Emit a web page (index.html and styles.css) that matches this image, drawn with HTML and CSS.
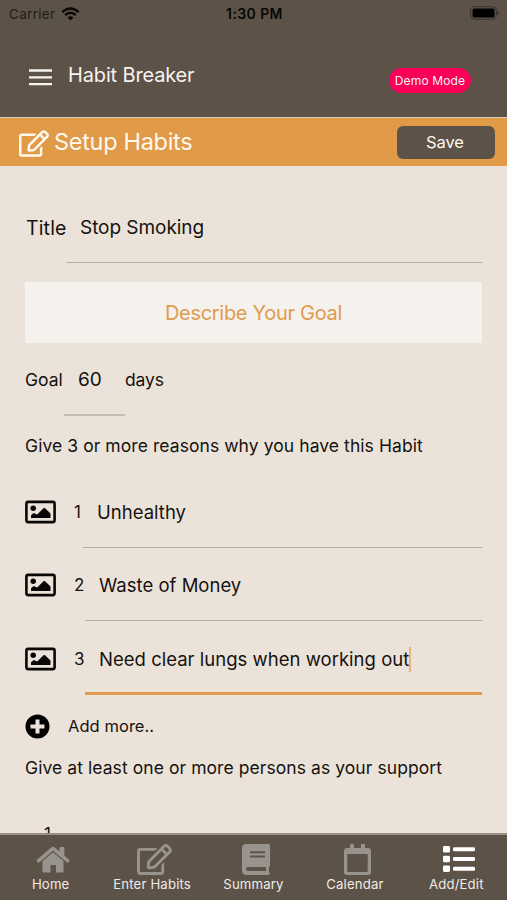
FILE: index.html
```html
<!DOCTYPE html>
<html lang="en">
<head>
<meta charset="utf-8">
<title>Habit Breaker</title>
<link rel="stylesheet" href="styles.css">
</head>
<body>
<svg class="symbols" aria-hidden="true">
  <symbol id="edit" viewBox="0 0 576 512"><path d="M402.3 344.9l32-32c5-5 13.7-1.5 13.7 5.700V464c0 26.500-21.500 48-48 48H48c-26.500 0-48-21.500-48-48V112c0-26.500 21.500-48 48-48h273.500c7.100 0 10.700 8.600 5.700 13.700l-32 32c-1.500 1.500-3.500 2.300-5.700 2.300H48v352h352V350.500c0-2.100.8-4.100 2.300-5.600zm156.600-201.800L296.300 405.700l-90.400 10c-26.200 2.900-48.500-19.200-45.600-45.600l10-90.400L432.900 17.100c22.900-22.900 59.900-22.900 82.700 0l43.200 43.200c22.900 22.900 22.900 60 .1 82.800zM460.1 174L402 115.900 216.200 301.800l-7.300 65.300 65.300-7.300L460.100 174zm64.800-79.700l-43.200-43.200c-4.100-4.100-10.800-4.100-14.800 0L436 82l58.100 58.100 30.900-30.900c4-4.200 4-10.800-.1-14.900z"/></symbol>
  <symbol id="picture" viewBox="0 0 31 23"><rect x="1.400" y="1.400" width="28.200" height="20.200" rx="1.800" fill="none" stroke="currentColor" stroke-width="2.600"/><circle cx="8.200" cy="7.700" r="2.700"/><path d="M6 17.500v-2.800l2.800-2.300 3.400 1.500 6.300-6.200q.8-.6 1.600 0l5.400 5.300v4.500z"/></symbol>
</svg>
<div class="phone">
  <div class="status">
    <div class="carrier"><span>Carrier</span>
      <svg width="19" height="14" viewBox="0 0 19 14" fill="none" stroke="#080706" stroke-width="2.400"><path d="M1.300 5.100Q9.500-1.900 17.700 5.100M4.100 8.200Q9.500 3.400 14.900 8.200"/><path d="M6.600 10.400Q9.500 8.100 12.400 10.400L9.500 13.400Z" fill="#080706" stroke="none"/></svg>
    </div>
    <div class="clock">1:30 PM</div>
    <svg class="battery" width="30" height="14" viewBox="0 0 30 14"><rect x=".7" y=".7" width="25.600" height="12.600" rx="3.500" fill="none" stroke="#38332d"/><rect x="2.500" y="2.500" width="22" height="9" rx="1.500" fill="#000"/><path d="M27.500 4.800q3 2.200 0 4.400z" fill="#302c27"/></svg>
  </div>
  <header class="appbar">
    <svg class="menu" width="23" height="17" viewBox="0 0 23 17"><path d="M0 1.500h23M0 8.300h23M0 15.200h23" stroke="#f7f3ef" stroke-width="2.300"/></svg>
    <h1>Habit Breaker</h1>
    <span class="demo">Demo Mode</span>
  </header>
  <div class="subbar">
    <svg class="subicon" width="30" height="27"><use href="#edit"/></svg>
    <h2>Setup Habits</h2>
    <button class="save">Save</button>
  </div>
  <main class="content">
    <div class="field title-field"><label class="title-label">Title</label><div class="input title-input"><span>Stop Smoking</span></div></div>
    <div class="describe"><span>Describe Your Goal</span></div>
    <div class="field goal-field"><label class="goal-label">Goal</label><div class="input goal-input"><span>60</span></div><span class="days">days</span></div>
    <p class="prompt reasons">Give 3 or more reasons why you have this Habit</p>
    <div class="reason"><svg class="pic" width="31" height="24"><use href="#picture"/></svg><span class="num one">1</span><div class="input line r1"><span>Unhealthy</span></div></div>
    <div class="reason"><svg class="pic" width="31" height="24"><use href="#picture"/></svg><span class="num">2</span><div class="input line r2"><span>Waste of Money</span></div></div>
    <div class="reason"><svg class="pic" width="31" height="24"><use href="#picture"/></svg><span class="num">3</span><div class="input line active r3"><span>Need clear lungs when working out</span><i class="caret"></i></div></div>
    <div class="add"><svg width="25" height="25" viewBox="0 0 25 25"><circle cx="12.500" cy="12.500" r="12"/><path d="M12.500 5.500v14M5.500 12.500h14" stroke="#ebe3da" stroke-width="4"/></svg><span>Add more..</span></div>
    <p class="prompt support">Give at least one or more persons as your support</p>
    <div class="person">1</div>
  </main>
  <nav class="tabs">
    <a class="tab home"><svg width="36" height="32" viewBox="0 0 36 32"><path d="M7.500 18L18 9.300 28.500 18v10.500q0 1-1 1H21V22h-5.500v7.500H8.500q-1 0-1-1z"/><path d="M1.700 17L16.200 4.500q1.800-1.400 3.600 0L24.500 8.500V4.700q0-.8.8-.8h3.300q.8 0 .8.800v8l5 4.300q.5.500.1 1L33 19.600q-.4.500-1 0L18 7.800 4.100 19.600q-.6.500-1 0L1.600 18q-.4-.5.100-1z"/></svg><span>Home</span></a>
    <a class="tab enter"><svg width="35" height="31"><use href="#edit"/></svg><span>Enter Habits</span></a>
    <a class="tab summary"><svg width="28" height="31" viewBox="0 0 28 31"><path fill-rule="evenodd" d="M4 0h22.500Q28 0 28 1.500v20q0 1-1 1.500-.5 2.500 0 5 .9.500.9 1.500T26.500 31H5q-5 0-5-5V4q0-4 4-4zM8 7.300v1.900h15V7.300zm0 4.200v1.900h15v-1.900zM6 23q-2 0-2 2t2 2h18v-4z"/></svg><span>Summary</span></a>
    <a class="tab calendar"><svg width="27" height="31" viewBox="0 0 27 31"><path fill-rule="evenodd" d="M6 1q0-1 1-1h2q1 0 1 1v3h7V1q0-1 1-1h2q1 0 1 1v3h3q3 0 3 3v21q0 3-3 3H3q-3 0-3-3V7q0-3 3-3h3zM3.300 10v17q0 1 1 1h18.400q1 0 1-1V10z"/></svg><span>Calendar</span></a>
    <a class="tab selected list"><svg width="32" height="26" viewBox="0 0 32 26"><rect width="7" height="6.500" rx="1.300"/><rect y="9.700" width="7" height="6.500" rx="1.300"/><rect y="19.400" width="7" height="6.500" rx="1.300"/><rect x="10" y="1.200" width="22" height="4" rx="1.300"/><rect x="10" y="11" width="22" height="4" rx="1.300"/><rect x="10" y="20.700" width="22" height="4" rx="1.300"/></svg><span>Add/Edit</span></a>
  </nav>
</div>
</body>
</html>
```
FILE: styles.css
```css
* { box-sizing: border-box; }
body { margin: 0; font-family: Inter, "Liberation Sans", sans-serif; color: #16120f; }
h1, h2, p { margin: 0; font-weight: 400; }
.symbols { position: absolute; width: 0; height: 0; }
.phone { width: 507px; height: 900px; display: flex; flex-direction: column; overflow: hidden; background: #ebe3da; white-space: nowrap; }
.status { height: 28px; flex: none; background: #5c5248; display: grid; grid-template-columns: 1fr auto 1fr; padding: 0 7px 0 9px; font-size: 13.5px; line-height: 28px; }
.carrier { display: flex; align-items: center; gap: 6px; height: 27px; color: #211d19; letter-spacing: .3px; }
.clock { font-weight: 600; font-size: 14px; letter-spacing: .4px; color: #080706; }
.battery { justify-self: end; margin-top: 6px; }
.appbar { height: 89px; flex: none; background: #5c5248; color: #f7f3ef; display: flex; align-items: flex-start; padding: 34px 36px 0 29px; }
.menu { margin-top: 7px; }
h1 { margin-left: 16px; font-size: 20px; line-height: 26px; letter-spacing: -.15px; }
.demo { margin: 6px 0 0 auto; width: 82px; height: 25px; border-radius: 13px; background: #fa0058; text-align: center; font-size: 12px; line-height: 25px; letter-spacing: .15px; }
.subbar { height: 49px; flex: none; border-top: 1px solid #d8cbbd; background: #e19a47; color: #fff8ef; display: flex; align-items: center; padding: 0 12px 0 19px; }
.subicon { fill: currentColor; margin-top: 3px; }
h2 { margin-left: 5px; font-size: 23.5px; line-height: 28px; letter-spacing: -.3px; }
.save { margin-left: auto; width: 98px; height: 33px; border: 0; border-radius: 6px; padding: 0 2px 0 0; background: #5c5248; color: #fff8f1; font: 400 16.500px/33px Inter, sans-serif; letter-spacing: -.1px; }
.content { flex: 1; min-height: 0; overflow: hidden; padding: 46px 25px 0; display: flex; flex-direction: column; }
.content > * { flex: none; }
.field { display: flex; }
.input { border-bottom: 1px solid #b8aea5; color: #16120f; }
.title-field { height: 51px; font-size: 19px; line-height: 32px; letter-spacing: -.05px; }
.title-label { width: 41px; padding-left: 1px; font-size: 19.500px; letter-spacing: .15px; }
.title-input { flex: 1; padding-left: 14px; }
.describe { margin-top: 19px; height: 61px; background: #f5f1ed; color: #df9b4e; text-align: center; font-size: 20px; line-height: 62px; letter-spacing: -.3px; border-radius: 1px; }
.goal-field { margin-top: 21px; height: 52px; line-height: 32px; font-size: 17.500px; }
.goal-label { width: 39px; letter-spacing: 0; }
.goal-input { width: 61px; padding-left: 14px; font-size: 19px; border-bottom: 2px solid #c6bbb1; }
.days { letter-spacing: -.1px; }
.prompt { font-size: 17.500px; line-height: 24px; letter-spacing: .07px; }
.reasons { margin-top: 18px; }
.reason { height: 73.300px; display: flex; line-height: 30px; padding-top: 20px; }
.reasons + .reason { margin-top: 19px; }
.pic { margin-top: 3px; color: #080706; fill: currentColor; }
.num { width: 29px; padding-left: 18px; font-size: 17px; flex: none; }
.one { width: 27px; }
.line { flex: 1; height: 51px; padding-left: 14px; font-size: 18.5px; letter-spacing: .02px; display: flex; }
.active { border-bottom: 3px solid #df9b4e; }
.caret { width: 2px; height: 25px; margin-top: 3px; background: #e4b67b; }
.add { display: flex; gap: 18px; align-items: center; height: 25px; margin-top: 17px; font-size: 16.500px; letter-spacing: .05px; }
.support { margin-top: 17px; }
.person { margin: 42px 0 0 19px; font-size: 17px; line-height: 24px; }
.tabs { height: 67px; flex: none; border-top: 2px solid #989087; background: #5c5248; display: grid; grid-template-columns: repeat(5, 1fr); color: #f1ebe5; font-size: 13.200px; letter-spacing: .15px; }
.tab { display: flex; flex-direction: column; align-items: center; justify-content: flex-end; padding-bottom: 7px; gap: 1px; line-height: 17px; }
.tab svg { fill: #99938e; margin-left: 5px; }
.tab.selected svg { fill: #fff; margin-bottom: 3px; }
```
